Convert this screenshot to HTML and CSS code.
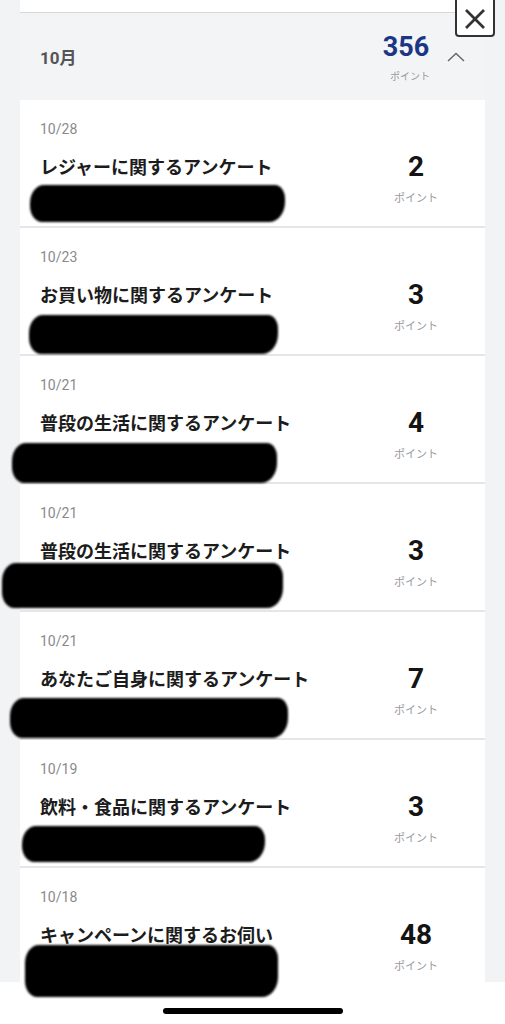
FILE: index.html
```html
<!DOCTYPE html>
<html lang="ja">
<head>
<meta charset="utf-8">
<link rel="stylesheet" href="styles.css">
</head>
<body>
<div class="screen">
  <div class="top-strip"></div>
  <div class="month-header">
    <div class="month">10月</div>
    <div class="month-right">
      <div class="total">
        <div class="total-num">356</div>
        <div class="unit">ポイント</div>
      </div>
      <svg class="chevron" width="18" height="10" viewBox="0 0 18 10"><polyline points="1,9 9,1.5 17,9" fill="none" stroke="#666" stroke-width="1.4"/></svg>
    </div>
  </div>

  <div class="list">
    <div class="item">
      <div class="date">10/28</div>
      <div class="main"><div class="title">レジャーに関するアンケート</div><div class="pts"><div class="pts-num">2</div><div class="unit">ポイント</div></div></div>
      <div class="redact r1"></div>
    </div>
    <div class="item">
      <div class="date">10/23</div>
      <div class="main"><div class="title">お買い物に関するアンケート</div><div class="pts"><div class="pts-num">3</div><div class="unit">ポイント</div></div></div>
      <div class="redact r2"></div>
    </div>
    <div class="item">
      <div class="date">10/21</div>
      <div class="main"><div class="title">普段の生活に関するアンケート</div><div class="pts"><div class="pts-num">4</div><div class="unit">ポイント</div></div></div>
      <div class="redact r3"></div>
    </div>
    <div class="item">
      <div class="date">10/21</div>
      <div class="main"><div class="title">普段の生活に関するアンケート</div><div class="pts"><div class="pts-num">3</div><div class="unit">ポイント</div></div></div>
      <div class="redact r4"></div>
    </div>
    <div class="item">
      <div class="date">10/21</div>
      <div class="main"><div class="title">あなたご自身に関するアンケート</div><div class="pts"><div class="pts-num">7</div><div class="unit">ポイント</div></div></div>
      <div class="redact r5"></div>
    </div>
    <div class="item">
      <div class="date">10/19</div>
      <div class="main"><div class="title">飲料・食品に関するアンケート</div><div class="pts"><div class="pts-num">3</div><div class="unit">ポイント</div></div></div>
      <div class="redact r6"></div>
    </div>
    <div class="item">
      <div class="date">10/18</div>
      <div class="main"><div class="title">キャンペーンに関するお伺い</div><div class="pts"><div class="pts-num">48</div><div class="unit">ポイント</div></div></div>
      <div class="redact r7"></div>
    </div>
  </div>

  <button class="close" aria-label="閉じる">
    <svg width="36" height="36" viewBox="0 0 36 36"><line x1="9" y1="10" x2="27" y2="28" stroke="#333" stroke-width="2.6"/><line x1="27" y1="10" x2="9" y2="28" stroke="#333" stroke-width="2.6"/></svg>
  </button>

  <div class="home-area"><div class="home-bar"></div></div>
</div>
</body>
</html>
```

FILE: styles.css
```css
html, body {
  margin: 0;
  padding: 0;
}
body {
  background: #f2f3f5;
  font-family: Roboto, "Noto Sans CJK JP", sans-serif;
  color: #1a1a1a;
}
.screen {
  position: relative;
  width: 505px;
  height: 1024px;
  overflow: hidden;
}
.top-strip {
  margin: 0 20px;
  height: 12px;
  background: #fff;
  border-bottom: 1px solid #d7d8db;
}
.month-header {
  margin: 0 20px;
  height: 87px;
  background: #f3f4f6;
  display: flex;
  align-items: center;
  justify-content: space-between;
  padding: 0 20px;
  box-sizing: border-box;
}
.month {
  font-size: 17px;
  font-weight: 700;
  color: #555;
}
.month-right {
  display: flex;
  align-items: center;
}
.total {
  display: flex;
  flex-direction: column;
  align-items: center;
  gap: 7px;
  margin-top: 1px;
}
.total-num {
  font-size: 27px;
  line-height: 30px;
  font-weight: 700;
  color: #1d3585;
  padding-left: 2px;
}
.unit {
  font-size: 11px;
  line-height: 14px;
  color: #9a9a9a;
  font-family: "Noto Sans CJK JP", sans-serif;
}
.total .unit {
  font-size: 10px;
  padding-left: 10px;
}
.chevron {
  margin-left: 17px;
  margin-top: 1px;
}
.list {
  margin: 0 20px;
}
.item {
  position: relative;
  height: 128px;
  background: #fff;
  border-bottom: 2px solid #e5e6e9;
  padding: 20px 29px 0 20px;
  box-sizing: border-box;
}
.item:last-child {
  height: 140px;
}
.date {
  font-size: 14px;
  line-height: 18px;
  color: #8a8a8a;
}
.main {
  display: flex;
  justify-content: space-between;
  align-items: flex-start;
  margin-top: 14px;
}
.title {
  margin-top: 2px;
  font-size: 18px;
  line-height: 24px;
  font-weight: 700;
  color: #1c1c1c;
  font-family: "Noto Sans CJK JP", sans-serif;
}
.pts {
  width: 80px;
  display: flex;
  flex-direction: column;
  align-items: center;
  gap: 8px;
}
.pts-num {
  font-size: 28px;
  line-height: 30px;
  font-weight: 700;
  color: #141414;
}
.redact {
  position: absolute;
  z-index: 5;
  background: #000;
  border-radius: 14px 10px 16px 12px / 18px 14px 20px 16px;
  filter: blur(1.3px);
}
.r1 { left: 10px; top: 85px; width: 255px; height: 37px; }
.r2 { left: 9px; top: 87px; width: 249px; height: 39px; }
.r3 { left: -8px; top: 87px; width: 265px; height: 40px; }
.r4 { left: -18px; top: 79px; width: 281px; height: 45px; }
.r5 { left: -10px; top: 86px; width: 278px; height: 40px; }
.r6 { left: 2px; top: 86px; width: 243px; height: 36px; }
.r7 { left: 5px; top: 77px; width: 253px; height: 52px; }
.close {
  position: absolute;
  top: -4px;
  left: 455px;
  width: 40px;
  height: 41px;
  padding: 0;
  margin: 0;
  border: 2px solid #333;
  border-radius: 4px;
  background: #fff;
  display: flex;
  align-items: center;
  justify-content: center;
  z-index: 10;
}
.close svg {
  display: block;
  margin-top: 2px;
}
.home-area {
  position: absolute;
  left: 0;
  top: 982px;
  width: 505px;
  height: 42px;
  background: #fff;
  z-index: 3;
}
.home-bar {
  margin: 26px auto 0;
  width: 180px;
  height: 6px;
  border-radius: 3px;
  background: #000;
}
```
